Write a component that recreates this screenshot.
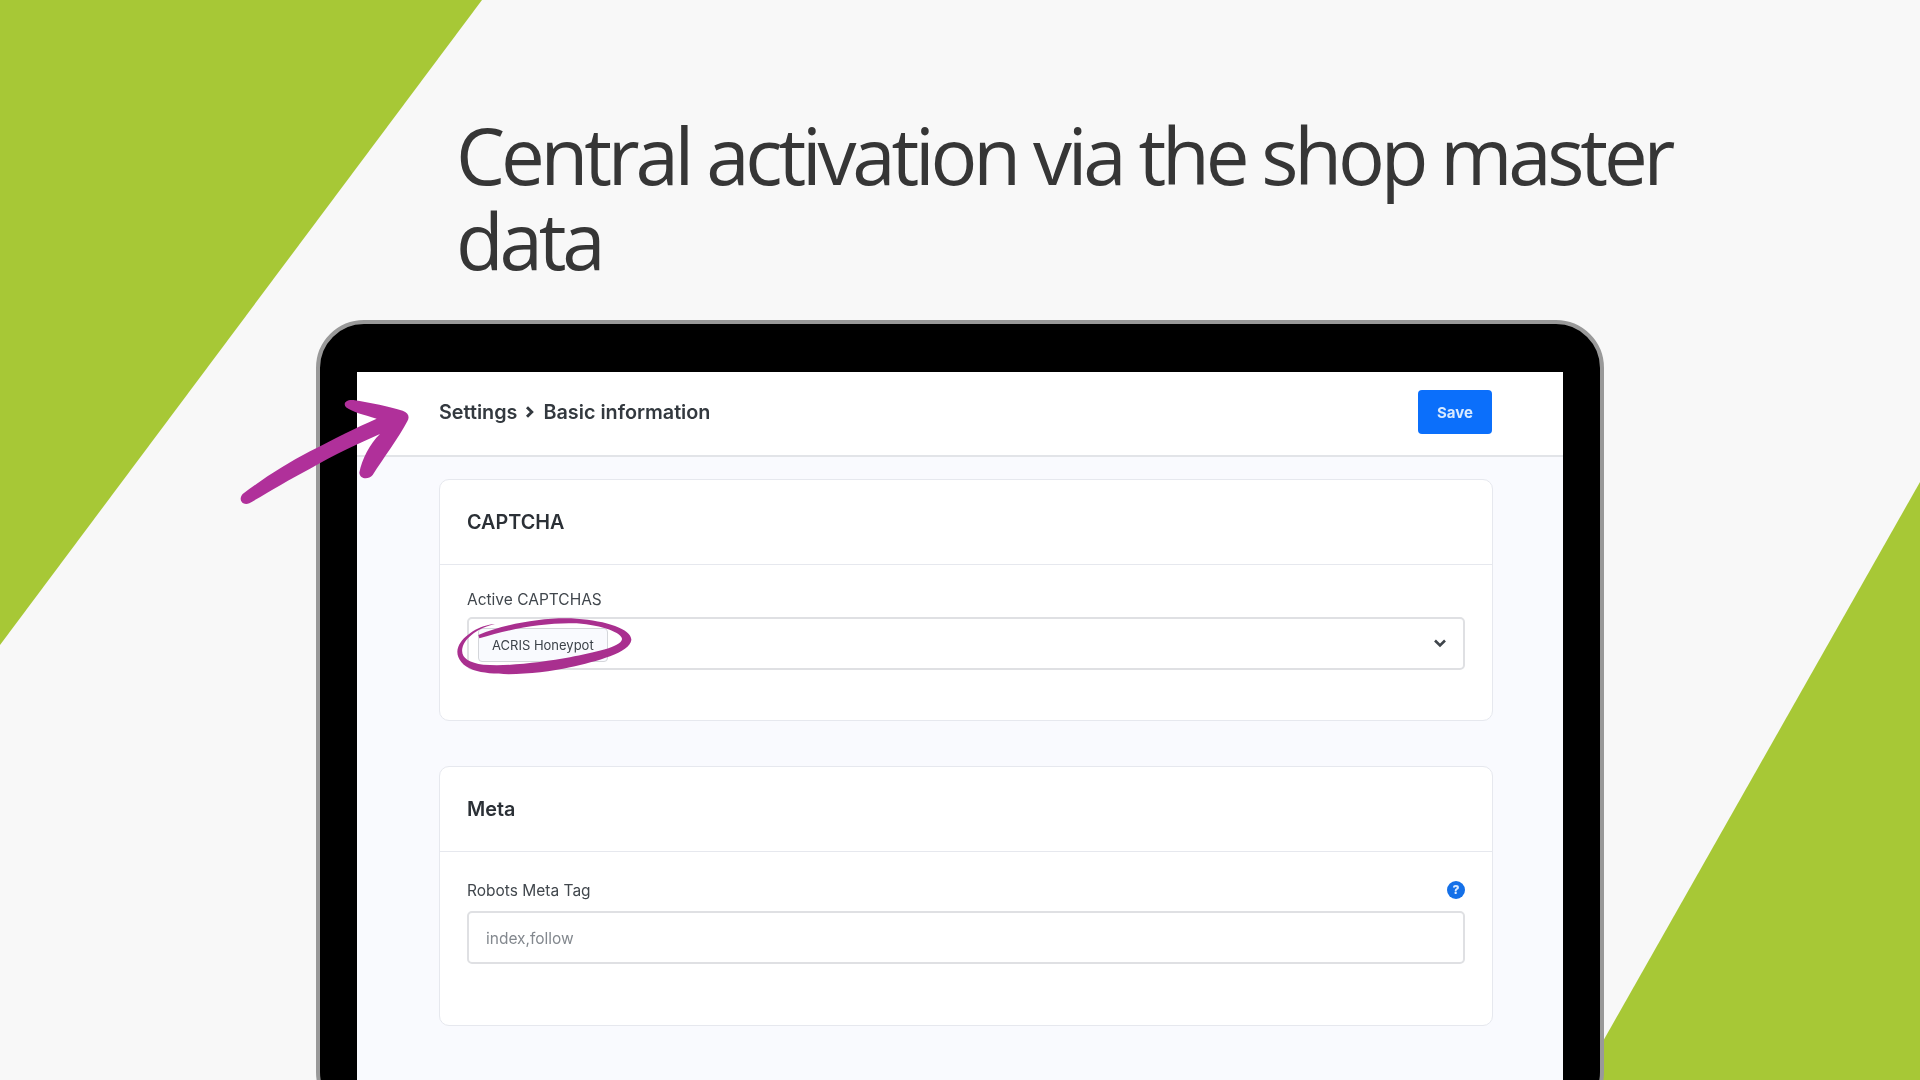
<script lang="ts">
  const cards = [
    { title: 'CAPTCHA', label: 'Active CAPTCHAS' },
    { title: 'Meta', label: 'Robots Meta Tag' }
  ]
</script>

<div class="page">
  <svg class="shapes" viewBox="0 0 1920 1080" aria-hidden="true">
    <polygon points="0,0 482,0 0,645" fill="#a7c836" />
    <polygon points="1920,482 1920,1080 1581,1080" fill="#a7c836" />
  </svg>

  <h1>Central activation via the shop master data</h1>

  <div class="device">
    <div class="screen">
      <header class="topbar">
        <div class="crumbs">
          <span>Settings</span>
          <svg class="crumb-sep" viewBox="0 0 8 10" aria-hidden="true">
            <path d="M1.5 1l4 4-4 4" fill="none" stroke="#33393f" stroke-width="2.4" />
          </svg>
          <span>Basic information</span>
        </div>
        <button class="save">Save</button>
      </header>

      <main class="content">
        <section class="card first">
          <h2>{cards[0].title}</h2>
          <div class="body">
            <div class="label">{cards[0].label}</div>
            <div class="field select">
              <span class="tag">ACRIS Honeypot</span>
              <svg class="chevron" viewBox="0 0 14 9" aria-hidden="true">
                <path d="M2 1.5l5 5 5-5" fill="none" stroke="#3f454b" stroke-width="2.6" />
              </svg>
            </div>
          </div>
        </section>

        <section class="card second">
          <h2>{cards[1].title}</h2>
          <div class="body">
            <div class="label row">
              <span>{cards[1].label}</span>
              <span class="help">?</span>
            </div>
            <div class="field input">index,follow</div>
          </div>
        </section>
      </main>
    </div>
  </div>

  <!-- hand-drawn annotations, authored in 3x crop coordinates -->
  <svg class="arrow" viewBox="0 0 1560 660" aria-hidden="true">
    <path
      fill="#b0309a"
      d="M68 552 C130 505 200 460 270 424 C340 388 410 352 470 326 C430 315 395 305 378 292 C368 280 378 268 400 270 C450 278 510 290 548 302 C565 308 570 320 562 334 C535 385 490 445 458 495 C445 510 420 508 418 488 C425 450 450 400 480 372 C420 398 340 436 270 476 C205 510 140 550 88 580 C66 588 54 568 68 552 Z"
    />
  </svg>

  <svg class="ring" viewBox="0 0 900 450" aria-hidden="true">
    <path
      fill="#a92f8f"
      d="M145 165 C230 130 350 110 440 116 C530 122 606 148 604 180 C600 218 500 244 420 262 C330 282 200 292 130 270 C90 256 75 225 85 200 C100 165 150 135 195 132 C150 142 105 170 97 205 C92 232 115 248 160 254 C240 260 340 246 420 232 C490 218 572 202 576 178 C578 160 520 136 440 130 C350 126 240 146 148 175 Z"
    />
  </svg>
</div>

<style>
  :global(body) {
    margin: 0;
  }

  .page {
    position: relative;
    width: 1920px;
    height: 1080px;
    overflow: hidden;
    background: #f8f8f8;
    font-family: Inter, 'Liberation Sans', sans-serif;
  }

  .shapes {
    position: absolute;
    inset: 0;
    width: 1920px;
    height: 1080px;
  }

  h1 {
    position: relative;
    margin: 0;
    padding: 113px 200px 0 456px;
    font-family: 'Open Sans', sans-serif;
    font-weight: 400;
    font-size: 78px;
    line-height: 85px;
    letter-spacing: -4.2px;
    color: #363636;
  }

  .device {
    position: relative;
    box-sizing: border-box;
    width: 1288px;
    height: 800px;
    margin: 37px 0 0 316px;
    padding: 48px 37px 0 37px;
    background: #000;
    border: 4px solid #999;
    border-radius: 48px;
  }

  .screen {
    height: 100%;
    background: #f9fafe;
    filter: blur(0.4px);
  }

  .topbar {
    display: flex;
    align-items: center;
    justify-content: space-between;
    box-sizing: border-box;
    height: 85px;
    padding: 0 71px 3px 82px;
    background: #fff;
    border-bottom: 2px solid #e2e4e8;
  }

  .crumbs {
    display: flex;
    align-items: center;
    gap: 8px;
    font-size: 19.8px;
    font-weight: 600;
    color: #33393f;
  }

  .crumb-sep {
    width: 10px;
    height: 12px;
  }

  .save {
    width: 74px;
    height: 44px;
    padding: 0;
    border: 0;
    border-radius: 4px;
    background: #0b6ffb;
    color: #d8eaff;
    font: 700 15px Inter, sans-serif;
  }

  .content {
    padding: 22px 70px 0 82px;
  }

  .card {
    box-sizing: border-box;
    background: #fff;
    border: 1px solid #e6e8ee;
    border-radius: 10px;
  }

  .first {
    height: 242px;
    margin-bottom: 45px;
  }

  .second {
    height: 260px;
  }

  h2 {
    box-sizing: border-box;
    height: 85px;
    margin: 0;
    padding: 0 27px;
    line-height: 85px;
    font-size: 19.8px;
    font-weight: 600;
    color: #2b3036;
    border-bottom: 1px solid #e6e8ee;
  }

  .body {
    padding: 25px 27px 0;
  }

  .second .body {
    padding-top: 29px;
  }

  .label {
    height: 27px;
    font-size: 15.5px;
    line-height: 20px;
    color: #41474d;
  }

  .row {
    display: flex;
    justify-content: space-between;
    align-items: flex-start;
    height: 30px;
  }

  .help {
    width: 18px;
    height: 18px;
    border-radius: 50%;
    background: #1470e8;
    color: #dcebff;
    text-align: center;
    font-size: 12px;
    font-weight: 800;
    line-height: 18px;
  }

  .field {
    box-sizing: border-box;
    display: flex;
    align-items: center;
    background: #fff;
    border: 2px solid #dfe0e3;
    border-radius: 5px;
  }

  .select {
    justify-content: space-between;
    height: 53px;
    padding: 0 16px 0 9px;
  }

  .tag {
    box-sizing: border-box;
    height: 34px;
    margin-top: 3px;
    padding: 0 13px;
    line-height: 32px;
    font-size: 13px;
    color: #3c4249;
    background: #f9fafe;
    border: 1px solid #d4d6da;
    border-radius: 4px;
  }

  .chevron {
    width: 14px;
    height: 9px;
  }

  .input {
    height: 53px;
    padding: 2px 0 0 17px;
    font-size: 15.5px;
    color: #83888e;
  }

  .arrow {
    position: absolute;
    left: 220px;
    top: 310px;
    width: 520px;
    height: 220px;
  }

  .ring {
    position: absolute;
    left: 430px;
    top: 580px;
    width: 300px;
    height: 150px;
  }
</style>
